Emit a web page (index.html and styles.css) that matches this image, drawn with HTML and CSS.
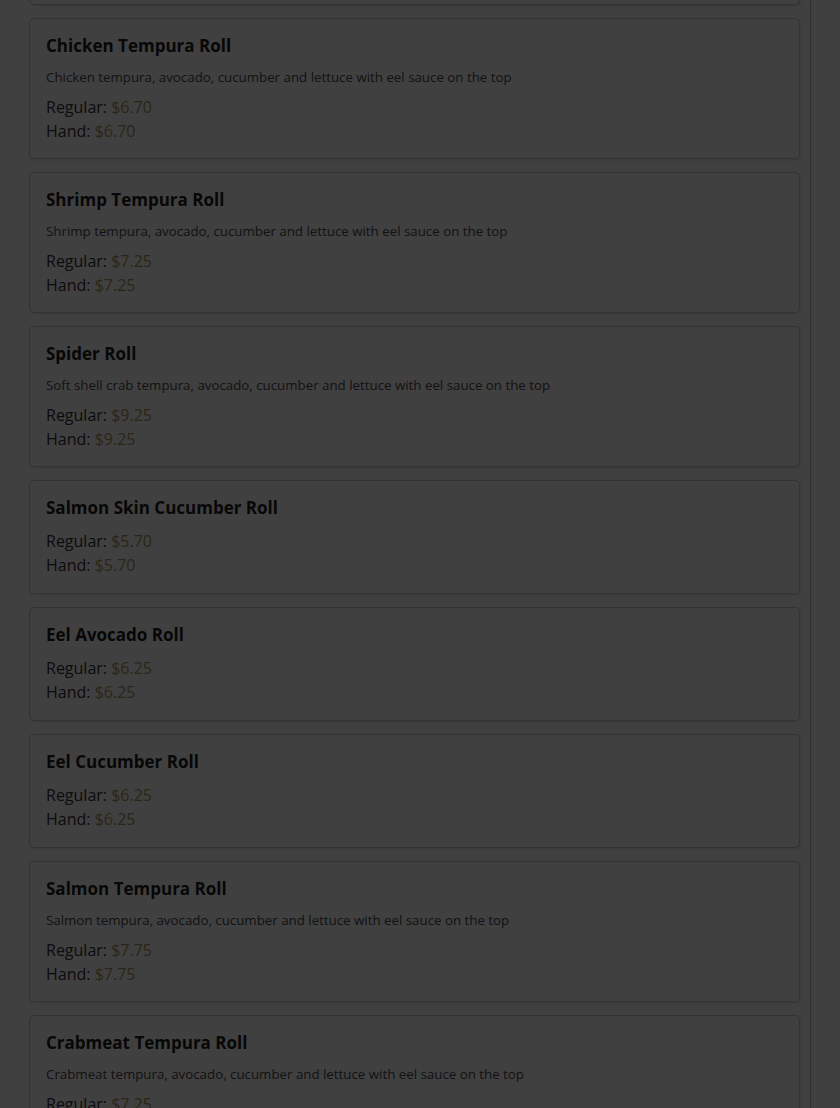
FILE: index.html
```html
<!DOCTYPE html>
<html lang="en">
<head>
<meta charset="utf-8">
<title>Menu</title>
<link rel="stylesheet" href="styles.css">
</head>
<body>
<div class="page">
  <main class="menu">
    <section class="item item-partial" aria-hidden="true"></section>
    <section class="item item-with-desc">
      <h3 class="item-name">Chicken Tempura Roll</h3>
      <p class="item-desc">Chicken tempura, avocado, cucumber and lettuce with eel sauce on the top</p>
      <div class="price">Regular: <span class="amount">$6.70</span></div>
      <div class="price">Hand: <span class="amount">$6.70</span></div>
    </section>
    <section class="item item-with-desc">
      <h3 class="item-name">Shrimp Tempura Roll</h3>
      <p class="item-desc">Shrimp tempura, avocado, cucumber and lettuce with eel sauce on the top</p>
      <div class="price">Regular: <span class="amount">$7.25</span></div>
      <div class="price">Hand: <span class="amount">$7.25</span></div>
    </section>
    <section class="item item-with-desc">
      <h3 class="item-name">Spider Roll</h3>
      <p class="item-desc">Soft shell crab tempura, avocado, cucumber and lettuce with eel sauce on the top</p>
      <div class="price">Regular: <span class="amount">$9.25</span></div>
      <div class="price">Hand: <span class="amount">$9.25</span></div>
    </section>
    <section class="item">
      <h3 class="item-name">Salmon Skin Cucumber Roll</h3>
      <div class="price">Regular: <span class="amount">$5.70</span></div>
      <div class="price">Hand: <span class="amount">$5.70</span></div>
    </section>
    <section class="item">
      <h3 class="item-name">Eel Avocado Roll</h3>
      <div class="price">Regular: <span class="amount">$6.25</span></div>
      <div class="price">Hand: <span class="amount">$6.25</span></div>
    </section>
    <section class="item">
      <h3 class="item-name">Eel Cucumber Roll</h3>
      <div class="price">Regular: <span class="amount">$6.25</span></div>
      <div class="price">Hand: <span class="amount">$6.25</span></div>
    </section>
    <section class="item item-with-desc">
      <h3 class="item-name">Salmon Tempura Roll</h3>
      <p class="item-desc">Salmon tempura, avocado, cucumber and lettuce with eel sauce on the top</p>
      <div class="price">Regular: <span class="amount">$7.75</span></div>
      <div class="price">Hand: <span class="amount">$7.75</span></div>
    </section>
    <section class="item item-with-desc">
      <h3 class="item-name">Crabmeat Tempura Roll</h3>
      <p class="item-desc">Crabmeat tempura, avocado, cucumber and lettuce with eel sauce on the top</p>
      <div class="price">Regular: <span class="amount">$7.25</span></div>
      <div class="price">Hand: <span class="amount">$7.25</span></div>
    </section>
  </main>
  <aside class="side"></aside>
</div>
<div class="overlay"></div>
</body>
</html>
```

FILE: styles.css
```css
html, body {
  margin: 0;
  padding: 0;
  background: #ffffff;
  height: 1108px;
  overflow: hidden;
}
body {
  font-family: "Open Sans", "Noto Sans", sans-serif;
  color: #333;
}
.page {
  display: flex;
  height: 1108px;
  overflow: hidden;
}
.menu {
  width: 811px;
  box-sizing: border-box;
  border-right: 1px solid #bdbdbd;
  padding: 0 10px 0 29px;
  display: flex;
  flex-direction: column;
  gap: 13px;
}
.side {
  flex: 1;
  border-left: 1px solid #f2f2f2;
}
.item {
  border: 1px solid #c9c9c9;
  border-radius: 5px;
  padding: 16px;
  background: #fff;
  box-shadow: 1px 1px 3px rgba(0, 0, 0, 0.12);
  flex: none;
}
.item-with-desc {
  padding-bottom: 15px;
}
.item-partial {
  height: 80px;
  box-sizing: border-box;
  margin-top: -75px;
}
.item-name {
  margin: 0 0 10px;
  font-size: 17px;
  line-height: 22px;
  font-weight: 700;
  color: #1c1c1c;
}
.item-with-desc .item-name {
  margin-bottom: 11px;
}
.item-desc {
  margin: 0 0 8px;
  font-size: 13.3px;
  line-height: 19px;
  color: #4a4a4a;
}
.price {
  font-size: 16px;
  line-height: 24px;
  color: #333;
}
.amount {
  color: #ab955e;
}
.overlay {
  position: fixed;
  inset: 0;
  background: rgba(0, 0, 0, 0.75);
}
```
